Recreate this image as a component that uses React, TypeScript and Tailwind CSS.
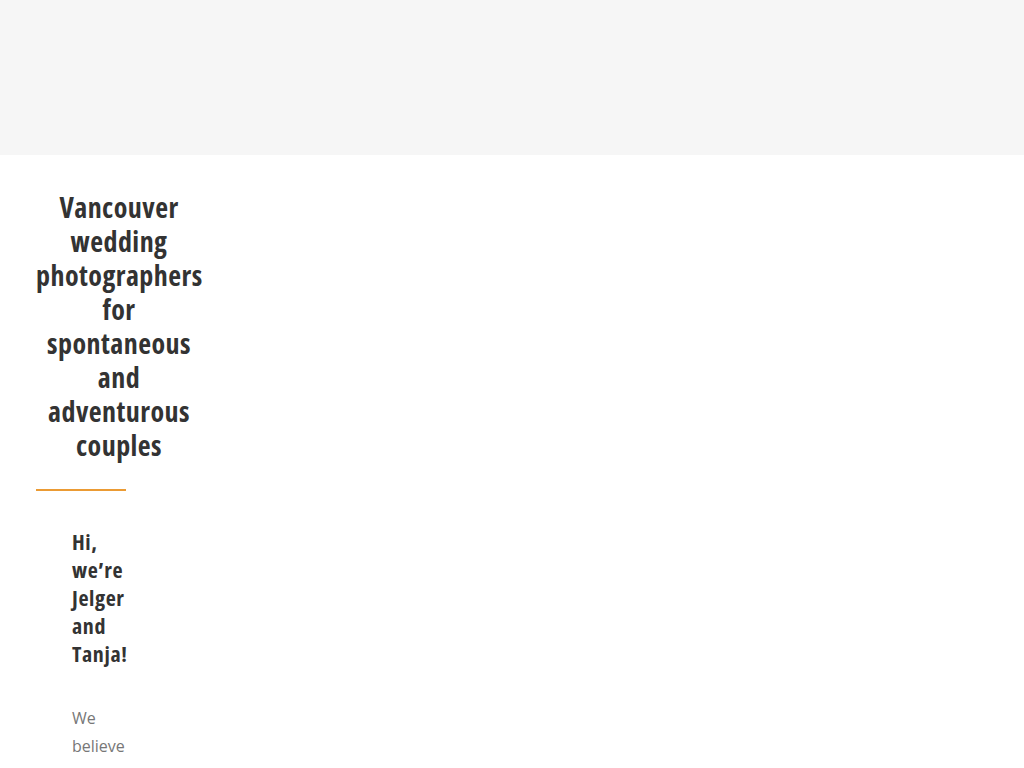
export default function App() {
  return (
    <div className="min-h-screen bg-white" style={{ fontFamily: '"Open Sans", "Noto Sans", sans-serif' }}>
      <header className="h-[155px] bg-[#f6f6f6]" />

      <section className="w-[166px] ml-[36px] pt-[35px]">
        <h1 className="text-center text-[28px] leading-[34px] font-bold text-[#333] font-stretch-[75%] tracking-[0.45px]">
          Vancouver wedding photographers for spontaneous and adventurous couples
        </h1>
        <div className="mt-[27px] h-[2px] w-[90px] bg-[#eb9b34]" />

        <div className="ml-[36px] w-[62px] pt-[36px]">
          <h2 className="text-[22px] leading-[28px] font-bold text-[#333] font-stretch-[75%] tracking-[0.6px]">
            Hi, we’re Jelger and Tanja!
          </h2>
          <p className="mt-[37px] text-[16px] leading-[28px] text-[#777]">We believe</p>
        </div>
      </section>
    </div>
  );
}
